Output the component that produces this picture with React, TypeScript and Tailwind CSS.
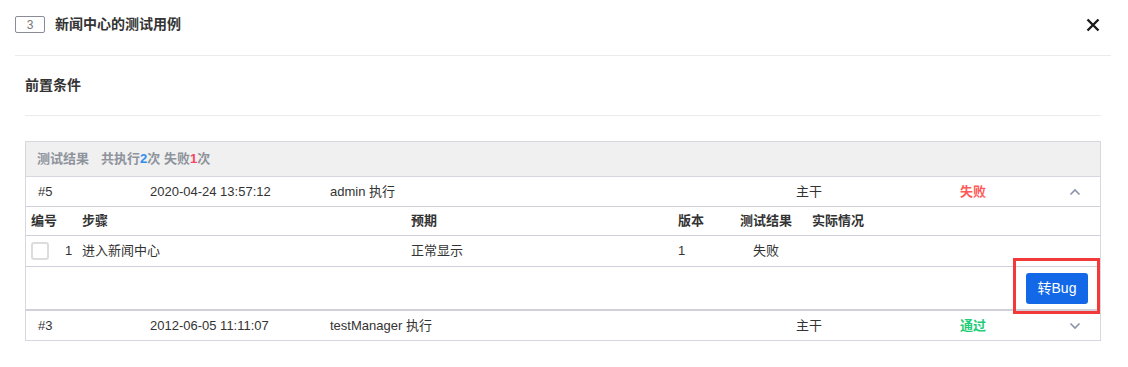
import React from "react";

const font = { fontFamily: '"Liberation Sans", "Noto Sans CJK SC", sans-serif' };

const Chevron: React.FC<{ up?: boolean }> = ({ up }) => (
  <svg width="12" height="8" viewBox="0 0 12 8" className="text-[#8a93a8]">
    <path
      d={up ? "M1.5 6.5 L6 2 L10.5 6.5" : "M1.5 1.5 L6 6 L10.5 1.5"}
      fill="none"
      stroke="currentColor"
      strokeWidth="1.6"
    />
  </svg>
);

interface RunRow {
  id: string;
  time: string;
  user: string;
  branch: string;
  result: "失败" | "通过";
  open: boolean;
}

const RunLine: React.FC<{ run: RunRow }> = ({ run }) => (
  <div className="grid h-[29px] grid-cols-[112px_180px_466px_164px_109px_1fr] items-center pl-[12px] text-[13px] text-[#333]">
    <span>{run.id}</span>
    <span>{run.time}</span>
    <span>{run.user} 执行</span>
    <span>{run.branch}</span>
    <span
      className={
        run.result === "失败"
          ? "font-bold text-[#ff5a5a]"
          : "font-bold text-[#1fcc78]"
      }
    >
      {run.result}
    </span>
    <span className="flex justify-start">
      <Chevron up={run.open} />
    </span>
  </div>
);

export default function App() {
  return (
    <div className="h-[367px] w-[1128px] bg-white" style={font}>
      <div className="flex h-[55px] items-center justify-between pl-[15px] pr-[28px]">
        <div className="flex items-center gap-[10px] pb-[6px]">
          <span className="flex h-[17px] w-[30px] items-center justify-center rounded-[2px] border border-[#8a8d96] text-[12px] text-[#777]">
            3
          </span>
          <span className="text-[14px] font-bold text-[#333]">新闻中心的测试用例</span>
        </div>
        <svg width="14" height="14" viewBox="0 0 14 14" className="mb-[6px]">
          <path d="M1.5 1.5 L12.5 12.5 M12.5 1.5 L1.5 12.5" stroke="#1a1a1a" strokeWidth="2.4" />
        </svg>
      </div>
      <div className="ml-[15px] mr-[17px] border-t border-[#ebebeb]" />

      <div className="px-[25px] pr-[27px]">
        <div className="flex h-[59px] items-center text-[14px] font-bold text-[#333]">
          前置条件
        </div>
        <div className="border-t border-[#ebebeb]" />

        <div className="relative mt-[25px] border border-[#d6d7df]">
          <div className="flex h-[34px] items-center gap-[12px] bg-[#f0f0f0] pl-[11px] text-[13px] font-bold text-[#8e939c]">
            <span>测试结果</span>
            <span>
              共执行<span className="text-[#2d8cf0]">2</span>次 失败
              <span className="text-[#f5475f]">1</span>次
            </span>
          </div>

          <div className="border-t border-[#d6d7df]">
            <RunLine
              run={{ id: "#5", time: "2020-04-24 13:57:12", user: "admin", branch: "主干", result: "失败", open: true }}
            />
          </div>

          <div className="grid h-[29px] grid-cols-[51px_329px_267px_62px_72px_1fr] items-center border-t border-[#cfd0dc] pl-[5px] text-[13px] font-bold text-[#333]">
            <span>编号</span>
            <span>步骤</span>
            <span>预期</span>
            <span>版本</span>
            <span>测试结果</span>
            <span>实际情况</span>
          </div>

          <div className="grid h-[31px] grid-cols-[51px_329px_267px_62px_72px_1fr] items-center border-t border-[#cfd0dc] pl-[5px] text-[13px] text-[#333]">
            <span className="flex items-center gap-[16px]">
              <span className="h-[18px] w-[18px] rounded-[3px] border-2 border-[#dcdcdc] bg-white" />
              <span>1</span>
            </span>
            <span>进入新闻中心</span>
            <span>正常显示</span>
            <span>1</span>
            <span className="pl-[13px]">失败</span>
            <span />
          </div>

          <div className="flex h-[43px] items-center justify-end border-t border-[#cfd0dc] pr-[12px]">
            <button className="h-[31px] w-[62px] rounded-[3px] bg-[#1368e8] text-[14px] text-white">
              转Bug
            </button>
          </div>

          <div className="border-t-2 border-[#cfd0d8]">
            <RunLine
              run={{ id: "#3", time: "2012-06-05 11:11:07", user: "testManager", branch: "主干", result: "通过", open: false }}
            />
          </div>

          <div className="pointer-events-none absolute left-[987px] top-[116px] h-[56px] w-[87px] border-[3px] border-[#f23a3a]" />
        </div>
      </div>
    </div>
  );
}
